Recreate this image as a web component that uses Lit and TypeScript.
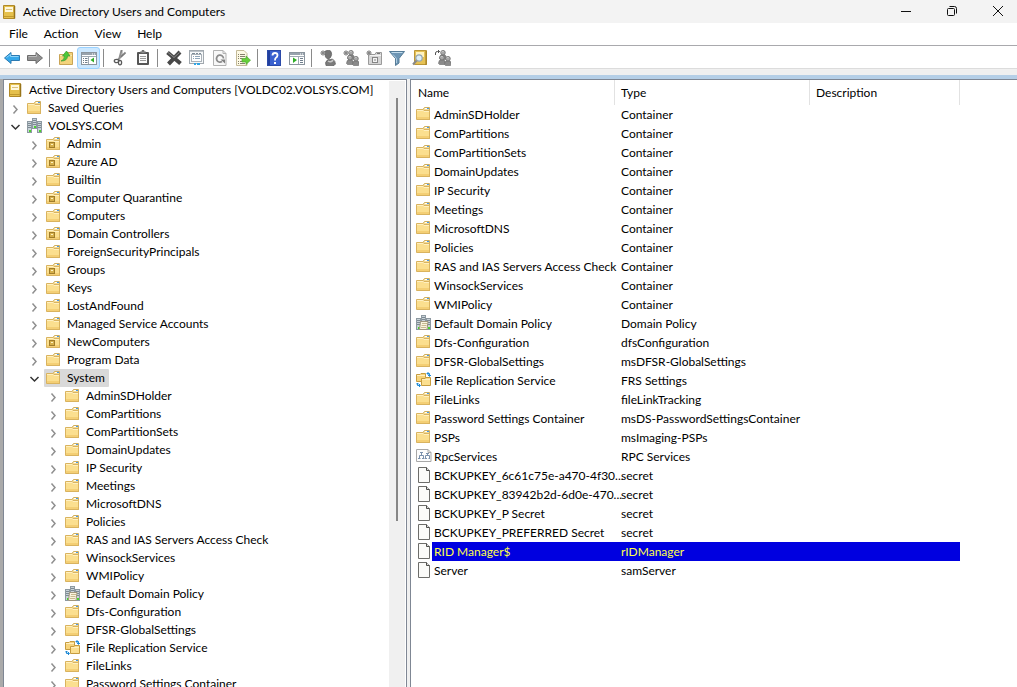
import { LitElement, html, svg, css, nothing, type TemplateResult } from "lit";
import { customElement, property, state } from "lit/decorators.js";
import { classMap } from "lit/directives/class-map.js";

const art = (body: TemplateResult) => html`<svg
  width="16" height="16" viewBox="0 0 16 16" fill="none" aria-hidden="true">${body}</svg>`;

const folderShape = svg`
  <path d="M7.500 3.500V2.500L8.500 1.500H13.500V14" fill="#f5dc96" stroke="#cfae5f"/>
  <rect x="9" y="2" width="4" height="1" fill="#fff"/>
  <rect x="11" y="2" width="2" height="1" fill="#4a9be8"/>
  <path d="M0.500 3.500H7L8 4.500H13.500V13.500H0.500Z" fill="#fbdf8f" stroke="#d9b35f"/>
  <path d="M1 4.500H7L8 5.500H13" stroke="#fff0c0"/>
  <path d="M1 11h12v2H1z" fill="#f4cf75"/>`;

const server = (x: number, y: number, h: number) => svg`
  <rect x=${x + 0.5} y=${y + 0.5} width="4" height=${h} fill="#c9d2d8" stroke="#8d99a1"/>
  <path d=${`M${x + 1} ${y + 2.5}h3M${x + 1} ${y + 4.5}h3M${x + 1} ${y + 6.5}h3`} stroke="#7d8a93"/>
  <rect x=${x + 2} y=${y + h - 2} width="2" height="2" fill="#49d32c"/>`;

const person = (x: number, y: number) => svg`
  <path d=${`M${x - 0.5} ${y + 8.5}q0-4 3.500-4t3.500 4l-1 1h-5z`} fill="#8a8a8a" stroke="#6a6a6a" stroke-width="0.600"/>
  <circle cx=${x + 3} cy=${y + 2.7} r="2.300" fill="#a8a8a8" stroke="#6c6c6c" stroke-width="0.800"/>
  <path d=${`M${x + 1.5} ${y + 2}q1-1 2-.5`} stroke="#d4d4d4"/>`;

const spark = svg`<circle cx="3" cy="3" r="2" fill="#a8a8a8"/>
  <path d="M3 0v6M0 3h6M1 1l4 4M5 1l-4 4" stroke="#858585" stroke-width="0.800"/>`;

const servers = svg`${server(5, 0, 10)}${server(0, 3, 11)}${server(10, 3, 11)}`;

const icons: Record<string, TemplateResult> = {
  folder: folderShape,
  ou: svg`${folderShape}
    <rect x="3.500" y="6.500" width="5" height="5" fill="#d6b04c" stroke="#a07c2a"/>
    <path d="M5 8.500h2" stroke="#fff3c4"/>`,
  console: svg`
    <path d="M1.500 1.500H12.500V14.500H1.500z" fill="#e5c04c" stroke="#b18a28"/>
    <path d="M12.500 2v12.500" stroke="#98741a" stroke-width="1.500"/>
    <path d="M2 12.500h10" stroke="#c19a2e"/>
    <rect x="3" y="3" width="8" height="5" fill="#fff8dc"/>
    <path d="M4 5.500h6" stroke="#d9c27a"/>`,
  domain: servers,
  policy: svg`${servers}
    <path d="M4.500 6.500H12L11 14.500H3.500z" fill="#faf4df" stroke="#a0967c"/>
    <path d="M6 8.500h5M5.500 10.500h5M5 12.500h5" stroke="#c8ba90"/>`,
  frs: svg`
    <path d="M.5 2.500H4l1-1H9.500V9.500H.5z" fill="#f7d47c" stroke="#c69c3f"/>
    <path d="M1 3.500h8" stroke="#fff0c0"/>
    <path d="M5.500 6.500H9l1-1H14.500V13.500H5.500z" fill="#fbdf8f" stroke="#c69c3f"/>
    <path d="M6 7.500h8" stroke="#fff0c0"/>
    <path d="M11 1.500h2.500V4M12 3l1.500 1.500L15 3M12.500 0L11 1.500 12.500 3M1.500 11v2.500H4M0 12.500L1.500 11 3 12.500M3 12l1.500 1.500L3 15" stroke="#1f8ad6"/>`,
  rpc: svg`
    <path d="M.5 1.500H12l3 3v9H.5z" fill="#fcfcfc" stroke="#a8a8a8"/>
    <path d="M12 1.500v3h3" stroke="#a8a8a8"/>
    <path d="M5.500 5v2.500M3.500 10V7.500h4V10M11.500 5v2.500M9.500 10V7.500h4V10M2 10.500h2.500M6 10.500h2.500M9 10.500h2M12.500 10.500H14M4 4.500h3M10 5.500h3" stroke="#7a90ac"/>`,
  page: svg`
    <path d="M2.500.5H10.500L13.500 3.500V15.500H2.500z" fill="#fbfbf9" stroke="#6d6d6a"/>
    <path d="M10.500.5v3h3" fill="#ddd" stroke="#4d4d4a"/>`,
  back: svg`<path d="M.5 8L7 2.500V5.500H15.500V10.500H7V13.500z" fill="#35a8ea" stroke="#2b7ab2"/>
    <path d="M2.500 7.500L6.500 4.500V6.500H14.500" stroke="#8ed4fa"/>`,
  forward: svg`<path d="M15.500 8L9 2.500V5.500H.5V10.500H9V13.500z" fill="#929292" stroke="#6c6c6c"/>
    <path d="M1.500 6.500H9.500V4.500" stroke="#bdbdbd"/>`,
  up: svg`<path d="M1.500 4.500H8l1-2h5.500V14.500H1.500z" fill="#f3d37c" stroke="#c9a455"/>
    <path d="M2 5.500h12" stroke="#fbeab4"/>
    <path d="M3 11Q6.500 10 6.500 6H4.500L8.500 1 12 6H9.500Q9.500 11 3 11z" fill="#4cc93a" stroke="#3a9a2e" stroke-width="0.700"/>`,
  tree: svg`<rect x=".5" y="2.500" width="15" height="12" fill="#fff" stroke="#8b959e"/>
    <path d="M1 3h14v2H1z" fill="#98a3ad"/><path d="M11 4h1M13 4h1" stroke="#fff"/>
    <path d="M1 6.500h14M7.500 7v7" stroke="#a0aab4"/>
    <path d="M2 8.500h1M4 8.500h2.500M2 10.500h1M4 10.500h2.500M2 12.500h1M4 12.500h2.500" stroke="#6f7e8c"/>
    <path d="M13 7.500v5L9.500 10z" fill="#2fae26"/>`,
  cut: svg`<path d="M9.500 0L7 9.500M13.500 2.500L6 9.500" stroke="#8f8f8f" stroke-width="1.800"/>
    <path d="M10 0v6M13.500 3L9 7" stroke="#6b6b6b" stroke-width="0.700"/>
    <ellipse cx="4.500" cy="11" rx="2.200" ry="1.600" stroke="#5a5a5a" stroke-width="1.300"/>
    <ellipse cx="8" cy="12.600" rx="1.600" ry="2.300" stroke="#5a5a5a" stroke-width="1.300"/>`,
  paste: svg`<rect x="2" y="2" width="12" height="13" rx="1" fill="#555"/>
    <rect x="4" y="4" width="8" height="9" fill="#fafafa"/>
    <path d="M5 3.500V2h2V.5h2V2h2v1.500z" fill="#8b8b8b" stroke="#555" stroke-width="0.700"/>
    <path d="M5 6.500h6M5 8.500h6M5 10.500h6" stroke="#9a9a9a"/>`,
  remove: svg`<path d="M1.500 2.500L14.500 13.500M14 2L2.500 14" stroke="#484848" stroke-width="4"/>
    <path d="M2 2.500L8 7.500 13.500 2.500" stroke="#8b8b8b"/>`,
  props: svg`<rect x=".5" y=".5" width="14" height="13" fill="#f6f8f9" stroke="#a2a9af"/>
    <path d="M1 1.500h13" stroke="#bcc3c9"/>
    <rect x="2.500" y="4.500" width="10" height="7" fill="#fff" stroke="#aab2b9"/>
    <path d="M3 3.500h3M7 3.500h2M10 3.500h2" stroke="#7c8a96"/>
    <path d="M4 6.500h1M6 6.500h5M4 8.500h1M6 8.500h5" stroke="#8fa5b8"/>
    <path d="M5 14h2M8 14h3" stroke="#31a5e4" stroke-width="2"/>`,
  refresh: svg`<path d="M1.500.5H11l3 3v12H1.500z" fill="#f8f8f8" stroke="#b2b2b2"/>
    <path d="M11 .5v3h3" stroke="#b2b2b2"/>
    <path d="M11.500 8.500a3.500 3.500 0 1 0-1.500 3" stroke="#8c8c8c" stroke-width="1.800"/>
    <path d="M8.500 9.500h4.500v4z" fill="#808080"/>`,
  exportList: svg`<path d="M1.500.5H9l3 3v12H1.500z" fill="#fdf9e4" stroke="#c4ba98"/>
    <path d="M3 4.500h1M5 4.500h5M3 6.500h1M5 6.500h5M3 8.500h1M5 8.500h2M3 11.500h1M5 11.500h2M3 13.500h1M5 13.500h5" stroke="#85806c"/>
    <path d="M7 8.500h4V6l4.500 4.200L11 14.500V12H7z" fill="#66cf3a" stroke="#4da830" stroke-width="0.700"/>`,
  help: svg`<rect x="1.500" y=".5" width="13" height="15" fill="#3a61cf" stroke="#2b4aa8"/>
    <path d="M3 1v14" stroke="#213f9f" stroke-width="2"/>
    <path d="M6.500 5.500Q6.500 3 9 3t2.500 2.300Q11.500 7 9.700 8 9 8.500 9 10.500" stroke="#fff" stroke-width="1.800"/>
    <rect x="8" y="12" width="2" height="2" fill="#fff"/>`,
  panel: svg`<rect x=".5" y="2.500" width="15" height="12" fill="#fff" stroke="#8b959e"/>
    <path d="M1 3h14v2H1z" fill="#98a3ad"/><path d="M11 4h1M13 4h1" stroke="#fff"/>
    <path d="M1 6.500h14M9.500 7v7" stroke="#a0aab4"/>
    <path d="M11 8.500h3M11 10.500h3M11 12.500h3" stroke="#6f7e8c"/>
    <path d="M4 7.500v5.500L8 10z" fill="#2fae26"/>`,
  user: svg`<path d="M4.500 1.500Q9-1 11 1.500q1.500 3-.5 6L8 9.500 5.500 7z" fill="#757575" stroke="#5a5a5a" stroke-width="0.700"/>
    <path d="M6 15.500q-1.500-3.500 1.500-5.500l5-1q3 2 3 5l-1.500 1.500z" fill="#7b7b7b" stroke="#5a5a5a" stroke-width="0.700"/>
    <path d="M8 11q3 2 5-1" stroke="#c9c9c9" stroke-width="1.500"/>${spark}`,
  group: svg`${person(5, 0)}${person(4, 5)}${person(10, 6)}${spark}`,
  newOu: svg`<path d="M2.500 4.500H9l1-2H15.500V14.500H2.500z" fill="#d6d6d6" stroke="#9a9a9a"/>
    <path d="M3 5.500h12" stroke="#f4f4f4"/>
    <rect x="6.500" y="7.500" width="5" height="5" fill="#f2f2f2" stroke="#858585"/>
    <path d="M8 10h2" stroke="#858585"/>
    <path d="M11 3.500h3" stroke="#777"/>${spark}`,
  filter: svg`<path d="M.5 1.500H15.500L10 8.500V13L6.500 15.500V8.500z" fill="#6d95b4" stroke="#567c98"/>
    <path d="M2.500 2.500h11" stroke="#c2dcec"/><path d="M4 4.500L7.500 8.500V13" stroke="#aecbe0"/>`,
  find: svg`<path d="M2.500.5H14.500V14.500H2.500z" fill="#e6c255" stroke="#bb9638"/>
    <rect x="4" y="2" width="8" height="5" fill="#fff3c0"/><path d="M14 1v14" stroke="#9d781b"/>
    <circle cx="7" cy="8" r="3.200" fill="#dceef8" stroke="#94a5b1" stroke-width="1.200"/>
    <path d="M4.500 10.500L1 14.500" stroke="#888" stroke-width="2"/>`,
  addTo: svg`${person(5, 0)}${person(4, 5)}${person(10, 6)}
    <path d="M.5 5V3Q.5 1.500 2.500 1.500H4.500M3 0L4.500 1.500 3 3" stroke="#555"/>`,
};

interface TreeRow { label: string; icon: string; depth: number; open?: boolean; leaf?: boolean }

const row = (depth: number, label: string, icon = "folder", open = false): TreeRow => ({ depth, label, icon, open });

const tree: TreeRow[] = [
  { ...row(0, "Active Directory Users and Computers [VOLDC02.VOLSYS.COM]", "console", true), leaf: true },
  row(1, "Saved Queries"),
  row(1, "VOLSYS.COM", "domain", true),
  row(2, "Admin", "ou"),
  row(2, "Azure AD", "ou"),
  row(2, "Builtin"),
  row(2, "Computer Quarantine", "ou"),
  row(2, "Computers"),
  row(2, "Domain Controllers", "ou"),
  row(2, "ForeignSecurityPrincipals"),
  row(2, "Groups", "ou"),
  row(2, "Keys"),
  row(2, "LostAndFound"),
  row(2, "Managed Service Accounts"),
  row(2, "NewComputers", "ou"),
  row(2, "Program Data"),
  row(2, "System", "folder", true),
  row(3, "AdminSDHolder"),
  row(3, "ComPartitions"),
  row(3, "ComPartitionSets"),
  row(3, "DomainUpdates"),
  row(3, "IP Security"),
  row(3, "Meetings"),
  row(3, "MicrosoftDNS"),
  row(3, "Policies"),
  row(3, "RAS and IAS Servers Access Check"),
  row(3, "WinsockServices"),
  row(3, "WMIPolicy"),
  row(3, "Default Domain Policy", "policy"),
  row(3, "Dfs-Configuration"),
  row(3, "DFSR-GlobalSettings"),
  row(3, "File Replication Service", "frs"),
  row(3, "FileLinks"),
  row(3, "Password Settings Container"),
];

const objects: [string, string, string][] = [
  ["AdminSDHolder", "Container", "folder"],
  ["ComPartitions", "Container", "folder"],
  ["ComPartitionSets", "Container", "folder"],
  ["DomainUpdates", "Container", "folder"],
  ["IP Security", "Container", "folder"],
  ["Meetings", "Container", "folder"],
  ["MicrosoftDNS", "Container", "folder"],
  ["Policies", "Container", "folder"],
  ["RAS and IAS Servers Access Check", "Container", "folder"],
  ["WinsockServices", "Container", "folder"],
  ["WMIPolicy", "Container", "folder"],
  ["Default Domain Policy", "Domain Policy", "policy"],
  ["Dfs-Configuration", "dfsConfiguration", "folder"],
  ["DFSR-GlobalSettings", "msDFSR-GlobalSettings", "folder"],
  ["File Replication Service", "FRS Settings", "frs"],
  ["FileLinks", "fileLinkTracking", "folder"],
  ["Password Settings Container", "msDS-PasswordSettingsContainer", "folder"],
  ["PSPs", "msImaging-PSPs", "folder"],
  ["RpcServices", "RPC Services", "rpc"],
  ["BCKUPKEY_6c61c75e-a470-4f30...", "secret", "page"],
  ["BCKUPKEY_83942b2d-6d0e-470...", "secret", "page"],
  ["BCKUPKEY_P Secret", "secret", "page"],
  ["BCKUPKEY_PREFERRED Secret", "secret", "page"],
  ["RID Manager$", "rIDManager", "page"],
  ["Server", "samServer", "page"],
];

const tools: [string, string][][] = [
  [["back", "Back"], ["forward", "Forward"]],
  [["up", "Up one level"], ["tree", "Show/Hide Console Tree"]],
  [["cut", "Cut"], ["paste", "Paste"]],
  [["remove", "Delete"], ["props", "Properties"], ["refresh", "Refresh"], ["exportList", "Export List"]],
  [["help", "Help"], ["panel", "Show/Hide Action Pane"]],
  [["user", "New user"], ["group", "New group"], ["newOu", "New organizational unit"],
   ["filter", "Filter options"], ["find", "Find objects"], ["addTo", "Add to a group"]],
];

const controls = css`
  button {
    font: inherit;
    color: inherit;
    background: none;
    border: 0;
    padding: 0;
    margin: 0;
  }
  svg {
    display: block;
    flex: none;
  }
`;

@customElement("title-bar")
class TitleBar extends LitElement {
  static styles = [controls, css`
    :host { display: flex; align-items: center; gap: 8px; height: 23px; background: #f3f3f3; padding-left: 2px; }
    .name { margin: 0 auto 0 -3px; font-size: 12px; font-weight: 400; }
    .caption { width: 38px; height: 23px; padding-bottom: 2px; display: grid; place-items: center; }
    .caption:hover { background: #e3e3e3; }
  `];
  render() {
    const caption = (label: string, d: string) => html`<button class="caption" aria-label=${label}>
      <svg width="12" height="12" viewBox="0 0 12 12" fill="none" stroke="#111"><path d=${d}/></svg></button>`;
    return html`${art(icons.console)}
      <h1 class="name">Active Directory Users and Computers</h1>
      ${caption("Minimize", "M1 6.500H11")}
      ${caption("Restore", "M2.500 3.500H7.500Q8.500 3.500 8.500 4.500V9.500Q8.500 10.500 7.500 10.500H2.500Q1.500 10.500 1.500 9.500V4.500Q1.500 3.500 2.500 3.500M3.500 1.500H8.500Q10.500 1.500 10.500 3.500V8.500")}
      ${caption("Close", "M1 1L11 11M11 1L1 11")}`;
  }
}

@customElement("tool-bar")
class ToolBar extends LitElement {
  @state() treeShown = true;
  static styles = [controls, css`
    :host { display: flex; height: 21px; padding-top: 1px; border-bottom: 1px solid #dcdcdc; }
    .set { display: flex; align-items: center; }
    .set + .set::before { content: ""; width: 1px; height: 18px; margin: 0 4px 0 3px; background: #8a8a8a; }
    .tool { width: 23px; height: 22px; display: grid; place-items: center; border: 1px solid transparent; border-radius: 3px; }
    .tool:hover { background: #e8f3fc; }
    .pressed { background: #cce8ff; border-color: #99d1ff; }
  `];
  render() {
    return tools.map((set) => html`<div class="set">${set.map(([icon, label]) => {
      const pressed = icon === "tree" && this.treeShown;
      return html`<button class=${classMap({ tool: true, pressed })} aria-label=${label} title=${label}
        @click=${() => { if (icon === "tree") this.treeShown = !this.treeShown; }}>${art(icons[icon])}</button>`;
    })}</div>`);
  }
}

@customElement("console-tree")
class ConsoleTree extends LitElement {
  @state() selected = "System";
  static styles = [controls, css`
    :host { display: flex; min-height: 0; background: #fff; padding: 1px 1px 0 0; }
    .rows { flex: 1; min-width: 0; margin: 0; padding: 0; list-style: none; overflow: hidden; }
    .row { display: flex; align-items: center; height: 18px; padding-left: 2px; }
    .step { flex: none; width: 19px; }
    .twisty { flex: none; width: 19px; height: 18px; display: grid; place-items: center; }
    .node { display: flex; align-items: center; gap: 3px; height: 18px; padding: 0 4px 0 2px; white-space: nowrap; border-radius: 1px; }
    .label { padding-left: 2px; }
    .chosen { background: #d9d9d9; }
    .track { flex: none; width: 16px; box-sizing: border-box; padding: 17px 7px; background: #f0f0f0; }
    .thumb { width: 2px; height: 74%; background: #868686; }
  `];
  render() {
    return html`<ul class="rows" role="tree" aria-label="Console tree">${tree.map((r) => html`
      <li class="row" role="treeitem" aria-level=${r.depth + 1} aria-selected=${r.label === this.selected}>
        ${Array.from({ length: Math.max(0, r.depth - 1) }, () => html`<span class="step"></span>`)}
        ${r.leaf ? nothing : html`<button class="twisty" aria-label=${(r.open ? "Collapse " : "Expand ") + r.label}>
          <svg width="11" height="11" viewBox="0 0 11 11" fill="none" stroke-width="1.500"
            stroke=${r.open ? "#333" : "#8f8f8f"}><path d=${r.open ? "M1.500 4L5.500 8L9.500 4" : "M3.500 2.500L7 6.500L3.500 10.500"}/></svg>
        </button>`}
        <button class=${classMap({ node: true, chosen: r.label === this.selected })}
          @click=${() => { this.selected = r.label; }}>
          ${art(icons[r.icon])}<span class="label">${r.label}</span>
        </button>
      </li>`)}</ul>
      <div class="track"><div class="thumb"></div></div>`;
  }
}

@customElement("object-list")
class ObjectList extends LitElement {
  @property() selected = "RID Manager$";
  static styles = [controls, css`
    :host { display: block; min-width: 0; overflow: hidden; background: #fff; }
    .list { table-layout: fixed; width: 549px; border-collapse: separate; border-spacing: 0; }
    .c-name { width: 204px; }
    .c-type { width: 195px; }
    .c-desc { width: 150px; }
    .head { height: 25px; padding: 0 0 0 6px; font-weight: 400; text-align: left; border-right: 1px solid #e2e2e2; box-sizing: border-box; }
    .head:first-child { padding-left: 7px; }
    .cell { height: 19px; padding: 0 0 0 6px; line-height: 19px; white-space: nowrap; }
    .first { padding: 0 0 0 5px; }
    .entry { display: flex; align-items: center; height: 19px; }
    .icon { display: flex; flex: none; padding-bottom: 1px; }
    .name { flex: 1; min-width: 0; padding-left: 2px; }
    .chosen .name, .chosen .cell:not(.first) { background: #0000e0; color: #ffff4a; }
  `];
  render() {
    return html`<table class="list">
      <colgroup><col class="c-name"><col class="c-type"><col class="c-desc"></colgroup>
      <thead><tr><th class="head" scope="col">Name</th><th class="head" scope="col">Type</th>
        <th class="head" scope="col">Description</th></tr></thead>
      <tbody>${objects.map(([name, type, icon]) => html`
        <tr class=${classMap({ chosen: name === this.selected })} @click=${() => { this.selected = name; }}>
          <td class="cell first"><div class="entry"><span class="icon">${art(icons[icon])}</span><span class="name">${name}</span></div></td>
          <td class="cell">${type}</td><td class="cell"></td>
        </tr>`)}</tbody>
    </table>`;
  }
}

@customElement("app-root")
class AppRoot extends LitElement {
  static styles = [controls, css`
    :host {
      display: flex;
      flex-direction: column;
      height: 100vh;
      overflow: hidden;
      background: #fff;
      color: #000;
      font: 12px/16px "Segoe UI", Lato, "Open Sans", sans-serif;
    }
    .menus { display: flex; height: 22px; border-bottom: 1px solid #a9a9ad; padding-left: 1px; }
    .menu { padding: 0 8px; }
    .menu:hover { background: #e5f3ff; }
    .band { height: 6px; flex: none; background: #f0f0f0; border-bottom: 4px solid #b5cfe7; }
    .panes { flex: 1; min-height: 0; display: flex; background: #f0f0f0; border-left: 3px solid #aaa; }
    .left { flex: 0 0 401px; border: solid #7f8794; border-width: 1px 1px 0 1px; }
    .right { flex: 1; margin-left: 3px; border: solid #7f8794; border-width: 1px 0 0 1px; }
  `];
  render() {
    return html`<title-bar></title-bar>
      <nav class="menus" aria-label="Menu bar">${["File", "Action", "View", "Help"].map((m) => html`<button class="menu">${m}</button>`)}</nav>
      <tool-bar></tool-bar>
      <div class="band"></div>
      <main class="panes">
        <console-tree class="left"></console-tree>
        <object-list class="right"></object-list>
      </main>`;
  }
}
